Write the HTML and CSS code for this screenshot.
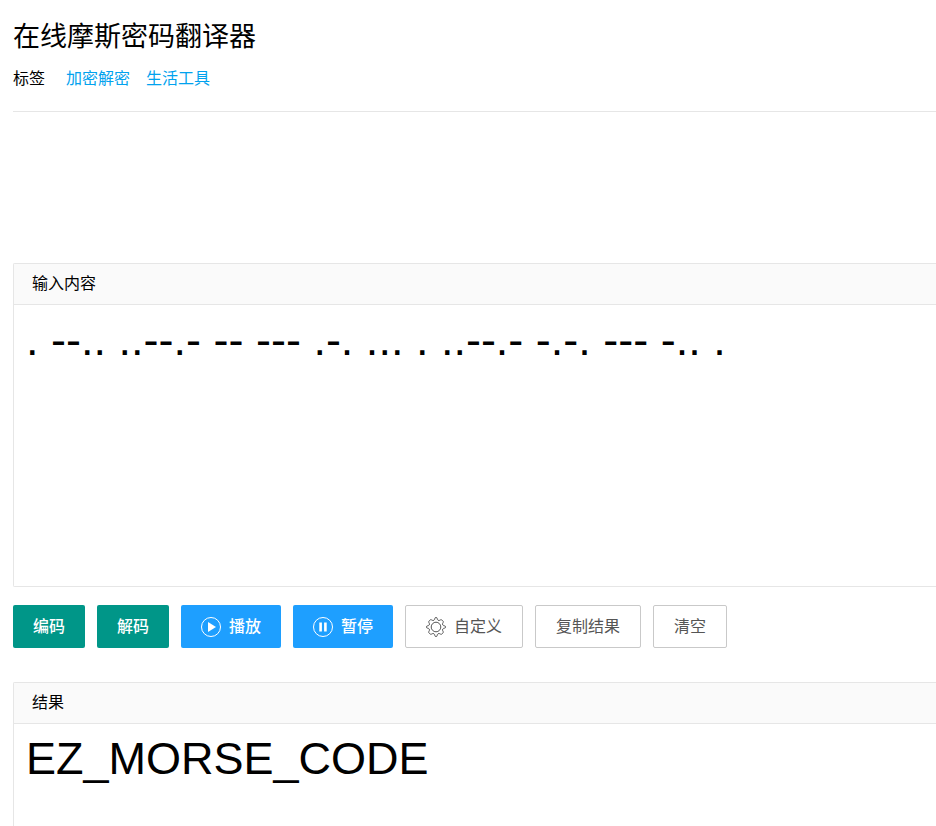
FILE: index.html
```html
<!DOCTYPE html>
<html lang="zh-CN">
<head>
<meta charset="utf-8">
<title>在线摩斯密码翻译器</title>
<link rel="stylesheet" href="styles.css">
</head>
<body>
<main class="page">
  <header class="head">
    <h1 class="title">在线摩斯密码翻译器</h1>
    <nav class="tags">
      <span class="tags-label">标签</span>
      <a href="#crypto">加密解密</a>
      <a href="#life">生活工具</a>
    </nav>
  </header>
  <section class="panel">
    <label class="panel-title" for="source">输入内容</label>
    <textarea class="panel-text source" id="source" spellcheck="false">. --.. ..--.- -- --- .-. ... . ..--.- -.-. --- -.. .</textarea>
  </section>
  <div class="actions">
    <button type="button" class="btn btn-green">编码</button>
    <button type="button" class="btn btn-green">解码</button>
    <button type="button" class="btn btn-blue">
      <svg class="icon" viewBox="0 0 20 20" aria-hidden="true"><circle cx="10" cy="10" r="9.5" fill="none" stroke="currentColor"/><path d="M7 5v10l8-5z" fill="currentColor"/></svg>
      播放
    </button>
    <button type="button" class="btn btn-blue">
      <svg class="icon" viewBox="0 0 20 20" aria-hidden="true"><circle cx="10" cy="10" r="9.5" fill="none" stroke="currentColor"/><path d="M6.300 5.500h2.600v9H6.300zM11.100 5.500h2.600v9h-2.600z" fill="currentColor"/></svg>
      暂停
    </button>
    <button type="button" class="btn btn-plain">
      <svg class="icon" viewBox="0 0 20 20" aria-hidden="true"><g fill="none" stroke="currentColor" stroke-linejoin="round"><circle cx="10" cy="10" r="4.800"/><path d="M7.900 3.300Q8.700 2.800 8.800 1.500Q8.900.5 10 .5T11.200 1.500Q11.300 2.800 12.100 3.300Q13.300 3.800 14.400 2.900Q15.200 2.300 16.500 3.500T17.100 5.600Q16.200 6.700 16.700 7.900Q17.200 8.700 18.500 8.800Q19.500 8.900 19.500 10T18.500 11.200Q17.200 11.300 16.700 12.100Q16.200 13.300 17.100 14.400Q17.700 15.200 16.500 16.500T14.400 17.100Q13.300 16.200 12.100 16.700Q11.300 17.200 11.200 18.500Q11.100 19.500 10 19.500T8.800 18.500Q8.700 17.200 7.900 16.700Q6.700 16.200 5.600 17.100Q4.800 17.700 3.500 16.500T2.900 14.400Q3.800 13.300 3.300 12.100Q2.800 11.300 1.500 11.200Q.5 11.100.5 10T1.500 8.800Q2.800 8.700 3.300 7.900Q3.800 6.700 2.900 5.600Q2.300 4.800 3.500 3.500T5.600 2.900Q6.700 3.800 7.900 3.300z"/></g></svg>
      自定义
    </button>
    <button type="button" class="btn btn-plain">复制结果</button>
    <button type="button" class="btn btn-plain">清空</button>
  </div>
  <section class="panel panel-result">
    <label class="panel-title" for="result">结果</label>
    <textarea class="panel-text result" id="result" spellcheck="false" readonly>EZ_MORSE_CODE</textarea>
  </section>
</main>
</body>
</html>
```
FILE: styles.css
```css
* {
  box-sizing: border-box;
}

body {
  margin: 0;
  color: #000;
  background: #fff;
  font: 16px/24px "Liberation Sans", "Noto Sans CJK SC", sans-serif;
}

.page {
  display: flex;
  flex-direction: column;
  min-height: 100vh;
  padding: 17px 0 0 13px;
}

.head {
  padding-bottom: 20px;
  margin-bottom: 151px;
  border-bottom: 1px solid #e6e6e6;
}

.title {
  margin: 0 0 10px;
  font-size: 27px;
  line-height: 40px;
  font-weight: 400;
}

.tags {
  display: flex;
  gap: 16px;
}

.tags-label {
  margin-right: 5px;
}

.tags a {
  color: #01a2ee;
  text-decoration: none;
}

.panel {
  display: flex;
  flex-direction: column;
  border: 1px solid #e6e6e6;
  border-right: 0;
  border-radius: 2px 0 0 2px;
}

.panel-result {
  flex: 1;
  border-bottom: 0;
}

.panel-title {
  padding: 8px 18px;
  border-bottom: 1px solid #e6e6e6;
  background: #fafafa;
}

.panel-text {
  display: block;
  width: 100%;
  border: 0;
  outline: 0;
  resize: none;
  color: #000;
  background: #fff;
  font: 45px/54px "Liberation Sans", sans-serif;
}

.source {
  height: 281px;
  padding: 8px 12px;
}

.result {
  flex: 1;
  padding: 8px 12px;
}

.actions {
  display: flex;
  flex-wrap: wrap;
  gap: 12px;
  margin: 18px 0 34px;
}

.btn {
  display: flex;
  align-items: center;
  gap: 8px;
  height: 43px;
  padding: 0 20px;
  border: 0;
  border-radius: 2px;
  color: #fff;
  font: inherit;
  white-space: nowrap;
}

.btn-green {
  background: #009688;
  font-weight: 500;
}

.btn-blue {
  background: #1e9fff;
  font-weight: 500;
}

.btn-plain {
  border: 1px solid #c9c9c9;
  color: #555;
  background: #fff;
}

.icon {
  width: 20px;
  height: 20px;
}
```
